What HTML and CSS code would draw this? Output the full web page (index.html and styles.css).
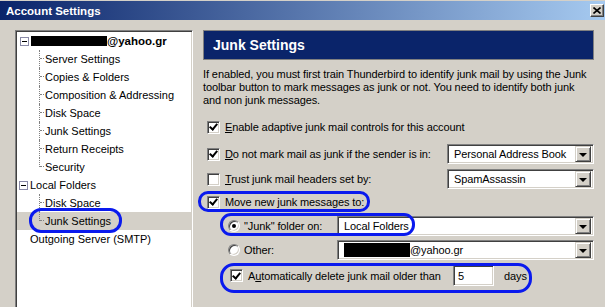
FILE: index.html
```html
<!DOCTYPE html>
<html>
<head>
	<title>Account Settings</title>
	<link rel="stylesheet" href="styles.css">
</head>
<body>
<div class="window">
	<div class="titlebar">
		<span class="title">Account Settings</span>
		<span class="close"><svg width="8" height="7" viewBox="0 0 8 7"><path d="M0.5 0.5 L7.5 6.5 M7.5 0.5 L0.5 6.5" stroke="#000" stroke-width="1.6" fill="none"/></svg></span>
	</div>

	<div class="main">
		<!-- account tree -->
		<div class="tree">
			<div class="row account"><span class="toggle"></span><span class="redact"></span><b>@yahoo.gr</b></div>
			<div class="row child"><span class="branch"></span>Server Settings</div>
			<div class="row child"><span class="branch"></span>Copies &amp; Folders</div>
			<div class="row child"><span class="branch"></span>Composition &amp; Addressing</div>
			<div class="row child"><span class="branch"></span>Disk Space</div>
			<div class="row child"><span class="branch"></span>Junk Settings</div>
			<div class="row child"><span class="branch"></span>Return Receipts</div>
			<div class="row child last"><span class="branch"></span>Security</div>
			<div class="row folder"><span class="toggle"></span>Local Folders</div>
			<div class="row child"><span class="branch"></span>Disk Space</div>
			<div class="row child last selected"><span class="branch"></span>Junk Settings</div>
			<div class="row plain">Outgoing Server (SMTP)</div>
		</div>

		<!-- settings page -->
		<div class="panel">
			<div class="header">Junk Settings</div>
			<p class="intro">If enabled, you must first train Thunderbird to identify junk mail by using the Junk<br>toolbar button to mark messages as junk or not. You need to identify both junk<br>and non junk messages.</p>

			<div class="opt opt1"><span class="check on"></span><span><u>E</u>nable adaptive junk mail controls for this account</span></div>
			<div class="opt opt2"><span class="check on"></span><span><u>D</u>o not mark mail as junk if the sender is in:</span>
				<span class="combo short"><span class="value">Personal Address Book</span><span class="drop"></span></span></div>
			<div class="opt opt3"><span class="check"></span><span><u>T</u>rust junk mail headers set by:</span>
				<span class="combo short"><span class="value">SpamAssassin</span><span class="drop"></span></span></div>
			<div class="opt opt4"><span class="check on"></span><span>Move new junk messages to:</span></div>

			<div class="opt sub opt5"><span class="radio on"></span><span class="rlabel">"Junk" folder on:</span>
				<span class="combo"><span class="value">Local Folders</span><span class="drop"></span></span></div>
			<div class="opt sub opt6"><span class="radio"></span><span class="rlabel">Other:</span>
				<span class="combo"><span class="value"><span class="redact small"></span>@yahoo.gr</span><span class="drop"></span></span></div>
			<div class="opt auto"><span class="check on"></span><span class="alabel">A<u>u</u>tomatically delete junk mail older than</span>
				<span class="field">5</span><span class="days">days</span></div>
		</div>
	</div>

	<!-- blue annotation rings drawn over the screenshot -->
	<div class="ring ring-tree"></div>
	<div class="ring ring-move"></div>
	<div class="ring ring-folder"></div>
	<div class="ring ring-auto"></div>
</div>
</body>
</html>
```

FILE: styles.css
```css
body {
	margin: 0;
	background-color: #D4D0C8;
	font-family: "Liberation Sans", Arial, sans-serif;
	font-size: 11px;
	color: #000;
}

.window {
	position: relative;
	width: 605px;
	height: 307px;
	overflow: hidden;
}

.titlebar {
	height: 19px;
	margin-top: 1px;
	background: linear-gradient(to right, #0A246A, #A6CAF0);
	display: flex;
	align-items: center;
	justify-content: space-between;
	padding-left: 6px;
}

.title {
	color: #fff;
	font-weight: bold;
	font-size: 11.5px;
}

.close {
	width: 14px;
	height: 13px;
	margin-right: 1px;
	box-sizing: border-box;
	background: #D4D0C8;
	border: 1px solid;
	border-color: #fff #404040 #404040 #fff;
	box-shadow: inset -1px -1px #808080;
	display: flex;
	align-items: center;
	justify-content: center;
}

.main {
	display: flex;
	padding: 10px 0 0 15px;
}

/* sunken white boxes */
.tree, .combo, .field {
	background: #fff;
	border: 1px solid;
	border-color: #808080 #fff #fff #808080;
	box-shadow: inset 1px 1px #404040, inset -1px -1px #D4D0C8;
}

.tree {
	width: 178px;
	height: 290px;
	box-sizing: border-box;
	padding: 1px;
}

.row {
	height: 18px;
	display: flex;
	align-items: center;
	white-space: nowrap;
}

.toggle {
	width: 9px;
	height: 9px;
	box-sizing: border-box;
	border: 1px solid #8a8aa8;
	margin-left: 3px;
	margin-right: 2px;
	background: #fff;
	display: flex;
	align-items: center;
	justify-content: center;
}

.toggle::after {
	content: "";
	width: 5px;
	height: 1px;
	background: #000;
}

.redact {
	display: inline-block;
	width: 76px;
	height: 10px;
	background: #000;
}

.account b {
	font-size: 11.5px;
}

.child {
	padding-left: 22px;
}

.branch {
	width: 6px;
	height: 18px;
	box-sizing: border-box;
	border-left: 1px dotted #808080;
	align-self: flex-start;
}

.branch::after {
	content: "";
	display: block;
	width: 4px;
	height: 8px;
	border-bottom: 1px dotted #808080;
}

.last .branch {
	height: 9px;
}

.folder .toggle {
	margin-left: 2px;
	margin-right: 2px;
}

.selected {
	background: #D4D0C8;
}

.plain {
	padding-left: 13px;
}

/* right side */
.panel {
	width: 391px;
	margin-left: 10px;
	letter-spacing: -0.1px;
}

.header {
	height: 30px;
	box-sizing: border-box;
	background: #0A246A;
	border: 1px solid #808080;
	color: #fff;
	font-weight: bold;
	font-size: 14px;
	letter-spacing: 0;
	padding-left: 9px;
	display: flex;
	align-items: center;
}

.intro {
	margin: 8px 0 0;
	line-height: 13px;
	white-space: nowrap;
}

.opt {
	height: 20px;
	display: flex;
	align-items: center;
	padding-left: 4px;
	white-space: nowrap;
}

.opt1 { margin-top: 10px; }
.opt2 { margin-top: 7px; }
.opt3 { margin-top: 5px; }
.opt4 { margin-top: 3px; }
.opt5 { margin-top: 4px; }
.opt6 { margin-top: 4px; }

.check {
	width: 13px;
	height: 13px;
	box-sizing: border-box;
	flex: none;
	margin-right: 5px;
	background: #fff;
	border: 1px solid;
	border-color: #808080 #fff #fff #808080;
	box-shadow: inset 1px 1px #404040, inset -1px -1px #D4D0C8;
	display: flex;
	align-items: center;
	justify-content: center;
}

.check.on::after {
	content: "";
	width: 3px;
	height: 6px;
	border: solid #000;
	border-width: 0 2px 2px 0;
	transform: translate(0, -1px) rotate(40deg);
}

.sub {
	padding-left: 25px;
}

.radio {
	width: 12px;
	height: 12px;
	box-sizing: border-box;
	flex: none;
	margin-right: 4px;
	border-radius: 50%;
	background: #fff;
	border: 1px solid;
	border-color: #808080 #fff #fff #808080;
	box-shadow: inset 1px 1px #404040, inset -1px -1px #D4D0C8;
	display: flex;
	align-items: center;
	justify-content: center;
}

.radio.on::after {
	content: "";
	width: 4px;
	height: 4px;
	border-radius: 50%;
	background: #000;
}

.rlabel {
	width: 93px;
}

.combo {
	height: 20px;
	box-sizing: border-box;
	flex: 1;
	display: flex;
	align-items: center;
	padding: 2px;
}

.combo.short {
	flex: none;
	width: 147px;
	margin-left: auto;
}

.combo .value {
	flex: 1;
	padding-left: 4px;
	display: flex;
	align-items: center;
}

.redact.small {
	width: 66px;
	height: 14px;
}

.drop {
	width: 16px;
	height: 16px;
	box-sizing: border-box;
	background: #D4D0C8;
	border: 1px solid;
	border-color: #D4D0C8 #404040 #404040 #D4D0C8;
	box-shadow: inset 1px 1px #fff, inset -1px -1px #808080;
	display: flex;
	align-items: center;
	justify-content: center;
}

.drop::after {
	content: "";
	border-style: solid;
	border-width: 4px 4px 0 4px;
	border-color: #000 transparent transparent transparent;
	margin-top: 1px;
}

.auto {
	height: 21px;
	margin-top: 5px;
	padding-left: 27px;
}

.alabel {
	width: 205px;
}

.field {
	width: 41px;
	height: 21px;
	box-sizing: border-box;
	padding-left: 4px;
	display: flex;
	align-items: center;
}

.days {
	margin-left: 10px;
}

/* annotation rings */
.ring {
	position: absolute;
	box-sizing: border-box;
	border: 3px solid #0A1AEE;
}

.ring-tree {
	left: 29px;
	top: 208px;
	width: 93px;
	height: 25px;
	border-radius: 12px;
}

.ring-move {
	left: 198px;
	top: 191px;
	width: 172px;
	height: 21px;
	border-radius: 10px;
}

.ring-folder {
	left: 220px;
	top: 213px;
	width: 195px;
	height: 23px;
	border-radius: 11px;
}

.ring-auto {
	left: 220px;
	top: 263px;
	width: 312px;
	height: 30px;
	border-radius: 14px;
}
```
